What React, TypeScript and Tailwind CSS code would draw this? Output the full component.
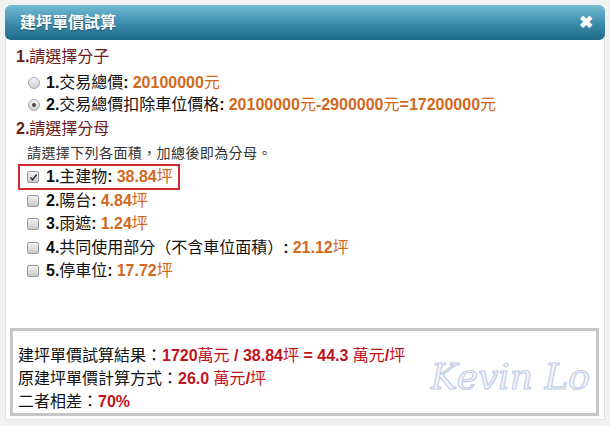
import React from 'react';

const font = "font-['Liberation_Sans','Noto_Sans_CJK_TC',sans-serif]";

// latin digits & punctuation come out bold, the CJK glyphs stay regular
function Mixed({ text }: { text: string }) {
  const parts = text.match(/[\u3000-\u9fff\uff00-\uffef]+|[^\u3000-\u9fff\uff00-\uffef]+/g) || [];
  return (
    <>
      {parts.map((p, i) =>
        /[\u3000-\u9fff\uff00-\uffef]/.test(p) ? (
          <span key={i} className="font-normal">{p}</span>
        ) : (
          <span key={i} className="font-bold whitespace-pre">{p}</span>
        )
      )}
    </>
  );
}

export default function App() {
  const areas = [
    { label: '1.主建物:', value: '38.84坪', checked: true },
    { label: '2.陽台:', value: '4.84坪', checked: false },
    { label: '3.雨遮:', value: '1.24坪', checked: false },
    { label: '4.共同使用部分（不含車位面積）:', value: '21.12坪', checked: false },
    { label: '5.停車位:', value: '17.72坪', checked: false },
  ];

  return (
    <div className={`w-[610px] h-[426px] bg-[#f2f2f2] pt-[5px] pl-[5px] ${font}`}>
      <div className="w-[600px] bg-white border border-[#e2e2e2] rounded-t-[6px] pb-[3px]">
        {/* Title bar */}
        <div className="h-[35px] -mx-px -mt-px rounded-[6px] bg-gradient-to-b from-[#74bcd4] via-[#3f8fae] to-[#1d6a88] flex items-center justify-between pl-[15px] pr-[12px]">
          <span className="text-white font-bold text-[16px] [text-shadow:0_1px_1px_rgba(0,0,0,0.35)]">建坪單價試算</span>
          <span className="text-white font-bold text-[17px] leading-none">✖</span>
        </div>

        {/* Numerator */}
        <div className="pt-[5px] pl-[10px] h-[29px] flex items-center text-[16px] text-[#6a1b1b]">
          <Mixed text="1.請選擇分子" />
        </div>
        <div className="mt-[3px]">
          <Radio checked={false} label="1.交易總價:" value="20100000元" />
          <Radio checked label="2.交易總價扣除車位價格:" value="20100000元-2900000元=17200000元" />
        </div>

        {/* Denominator */}
        <div className="mt-px pl-[10px] h-[24px] flex items-center text-[16px] text-[#6a1b1b]">
          <Mixed text="2.請選擇分母" />
        </div>
        <div className="pl-[21px] h-[24px] flex items-center text-[14px] tracking-[0.4px] text-[#333]">
          請選擇下列各面積，加總後即為分母。
        </div>
        <div className="mt-[0.5px]">
          {areas.map((a, i) => (
            <div key={a.label} className="relative h-[23.5px] pl-[21px] flex items-center text-[16px]">
              {i === 0 && (
                <span className="absolute left-[12px] top-[-1.5px] w-[162px] h-[26px] border-2 border-[#d8262e]" />
              )}
              <Checkbox checked={a.checked} />
              <span className="ml-[7px] text-[#111]"><Mixed text={a.label} /></span>
              <span className="ml-[4px] text-[#d2691e]"><Mixed text={a.value} /></span>
            </div>
          ))}
        </div>

        {/* Result */}
        <div className="relative mt-[45px] ml-[4px] w-[589px] h-[88px] border-[3px] border-[#c6c6c6] pl-[5px] pt-[13px] text-[16px] text-[#111]">
          <div className="h-[23px] flex items-center">
            建坪單價試算結果：
            <span className="text-[#c0141c]"><Mixed text="1720萬元 / 38.84坪 = 44.3 萬元/坪" /></span>
          </div>
          <div className="h-[23px] flex items-center">
            原建坪單價計算方式：
            <span className="text-[#c0141c]"><Mixed text="26.0 萬元/坪" /></span>
          </div>
          <div className="h-[23px] flex items-center">
            二者相差：
            <span className="text-[#c0141c]"><Mixed text="70%" /></span>
          </div>
          <span className="absolute right-[6px] top-[28px] font-['DejaVu_Serif',serif] italic text-[36px] leading-none text-[#f6f8fd] [-webkit-text-stroke:1.2px_#c3cde6]">
            Kevin Lo
          </span>
        </div>
      </div>
    </div>
  );
}

function Radio({ checked, label, value }: { checked: boolean; label: string; value: string }) {
  return (
    <div className="h-[22px] pl-[22px] flex items-center text-[16px]">
      <span className="w-[12px] h-[12px] rounded-full border border-[#a8a8a8] bg-gradient-to-b from-[#f6f6f6] to-[#cfcfcf] flex items-center justify-center">
        {checked && <span className="w-[4px] h-[4px] rounded-full bg-[#4a4a4a]" />}
      </span>
      <span className="ml-[6px] text-[#111]"><Mixed text={label} /></span>
      <span className="ml-[4px] text-[#d2691e]"><Mixed text={value} /></span>
    </div>
  );
}

function Checkbox({ checked }: { checked: boolean }) {
  return (
    <span className="w-[12px] h-[12px] rounded-[2px] border border-[#9a9a9a] bg-gradient-to-b from-[#f4f4f4] to-[#c9c9c9] flex items-center justify-center">
      {checked && (
        <svg width="9" height="9" viewBox="0 0 9 9">
          <path d="M1.5 4.5 L3.6 6.8 L7.6 1.6" fill="none" stroke="#333" strokeWidth="1.7" />
        </svg>
      )}
    </span>
  );
}
